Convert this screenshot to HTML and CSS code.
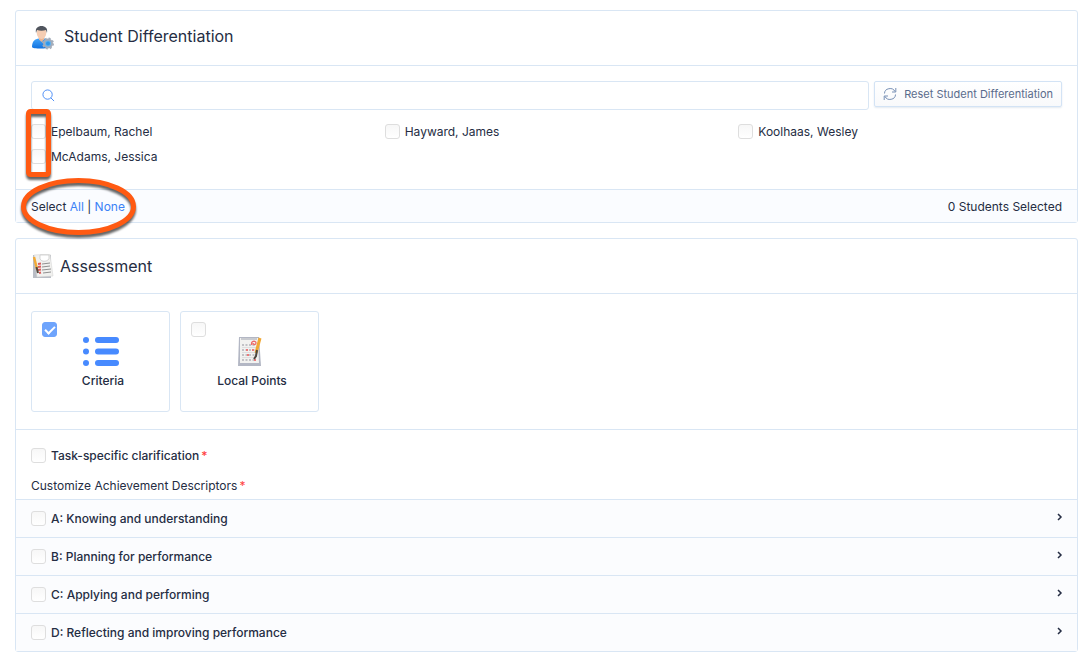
FILE: index.html
```html
<!DOCTYPE html>
<html lang="en">
<head>
  <meta charset="UTF-8">
  <meta name="viewport" content="width=device-width, initial-scale=1.0">
  <title>Student Differentiation</title>
  <link rel="stylesheet" href="styles.css">
</head>
<body>
  <section class="card">
    <header class="card-header students-header">
      <svg class="header-icon" viewBox="0 0 22 24" aria-hidden="true">
        <defs>
          <linearGradient id="shirt" x1="0" y1="0" x2="0" y2="1">
            <stop offset="0" stop-color="#43a5fb"/>
            <stop offset="1" stop-color="#1272df"/>
          </linearGradient>
        </defs>
        <path d="M0 21c0-6 3-8 7-8.500h5c3 .5 5 3 5 8.500 0 2-17 2-17 0z" fill="url(#shirt)"/>
        <path d="M7 11h5v2.500l-2.500 2.500-2.500-2.500z" fill="#e8b595"/>
        <ellipse cx="9.500" cy="7" rx="4.800" ry="6" fill="#f5cdb3"/>
        <path d="M4 7C3 2 6 0 9.500 0S16 2 15 7l-1-3c-3 1-6 1-9 0z" fill="#50555e"/>
        <circle cx="16" cy="17.500" r="4" fill="#65b2ed" stroke="#a3acba" stroke-width="2"/>
        <circle cx="16" cy="17.500" r="5.200" fill="none" stroke="#a3acba" stroke-width="1.600" stroke-dasharray="2 2.080"/>
        <circle cx="16" cy="17.500" r="2" fill="#2f96ea"/>
      </svg>
      <h2>Student Differentiation</h2>
    </header>

    <div class="toolbar">
      <label class="search">
        <svg viewBox="0 0 14 14" aria-hidden="true">
          <circle cx="6" cy="6" r="5"/>
          <path d="M9.500 9.500l3.500 3.500"/>
        </svg>
        <input type="text" aria-label="Search students">
      </label>
      <button class="reset-button" type="button">
        <svg viewBox="0 0 14 14" aria-hidden="true">
          <path d="M1.500 6.500a5.500 5 0 0 1 10.500-2M12.800 1v4H9M12.500 7.500a5.500 5 0 0 1-10.500 2M1.200 13V9H5"/>
        </svg>
        Reset Student Differentiation
      </button>
    </div>

    <div class="students">
      <label class="check"><input type="checkbox">Epelbaum, Rachel</label>
      <label class="check"><input type="checkbox">Hayward, James</label>
      <label class="check"><input type="checkbox">Koolhaas, Wesley</label>
      <label class="check"><input type="checkbox">McAdams, Jessica</label>
    </div>

    <footer class="card-footer">
      <span>Select <a href="#">All</a> | <a href="#">None</a></span>
      <span>0 Students Selected</span>
    </footer>

    <!-- highlights over the tick boxes and the select links -->
    <svg class="highlights" viewBox="0 0 130 140" aria-hidden="true">
      <rect x="12.500" y="5.500" width="20" height="63" rx="2"/>
      <ellipse cx="62.500" cy="100.500" rx="55" ry="26"/>
    </svg>
  </section>

  <section class="card">
    <header class="card-header">
      <svg class="header-icon" viewBox="0 0 22 24" aria-hidden="true">
        <path d="M1 1h18v23H1z" fill="#b9bdc5"/>
        <path d="M2 1l16-1 3 22-16 1z" fill="#f1f1ef" stroke="#d0d0d0" stroke-width=".5"/>
        <path d="M8 1h9v4c-3 3-7 3-9 0z" fill="#fff" stroke="#c4c4c4" stroke-width=".7"/>
        <path d="M10 10l8-1M10 13l8-1M10 16l9-1M11 19l8-1" stroke="#909090"/>
        <path d="M6 10l3-.5M6 13l3-.5M6 16l3-.5M7 19l2-.5" stroke="#dc5a58" stroke-width="2"/>
        <path d="M2 3l3 12" stroke="#f2aa35" stroke-width="2.400"/>
        <path d="M4.500 13l1.500 6" stroke="#55483c" stroke-width="2"/>
      </svg>
      <h2>Assessment</h2>
    </header>

    <div class="tiles">
      <label class="tile">
        <input type="checkbox" checked>
        <svg class="tile-icon" viewBox="0 0 36 30" aria-hidden="true">
          <g fill="#478aff">
            <circle cx="3" cy="3" r="3"/>
            <circle cx="3" cy="14.500" r="3"/>
            <circle cx="3" cy="26" r="3"/>
            <rect x="12" width="24" height="6" rx="3"/>
            <rect x="12" y="11.500" width="24" height="6" rx="3"/>
            <rect x="12" y="23" width="24" height="6" rx="3"/>
          </g>
        </svg>
        <span>Criteria</span>
      </label>
      <label class="tile">
        <input type="checkbox">
        <svg class="tile-icon" viewBox="0 0 36 30" aria-hidden="true">
          <path d="M7 0h20l2 29H6z" fill="#b3b7c4"/>
          <path d="M8 1h18l1 25H8z" fill="#f2f2f0"/>
          <path d="M9 2h16" stroke="#c9cbd0" stroke-width="2"/>
          <path d="M10 8h14M10 13h14M10 18h14M10 23h14" stroke="#c2c2c6" stroke-width="2" stroke-dasharray="2 1.500"/>
          <path d="M10 10.500h14M10 15.500h14M10 20.500h14" stroke="#d5d5d8" stroke-width=".7"/>
          <path d="M14 13h2M20 13h2M15 18h2M22 23h2" stroke="#ed7a7a" stroke-width="2"/>
          <path d="M20 8c-2-4 4-5 4-2 0 2-3 2-3 0" fill="none" stroke="#ee6767" stroke-width="1.300"/>
          <path d="M28 1l-4 15" stroke="#f1a834" stroke-width="3"/>
          <path d="M25 13l-1 6-2 3" fill="none" stroke="#4b463f" stroke-width="2"/>
        </svg>
        <span>Local Points</span>
      </label>
    </div>

    <div class="descriptors">
      <label class="check strong"><input type="checkbox">Task-specific clarification<span class="required">*</span></label>
      <p>Customize Achievement Descriptors<span class="required">*</span></p>
    </div>

    <div class="criteria">
      <div class="criterion">
        <label class="check strong"><input type="checkbox">A: Knowing and understanding</label>
        <button type="button" aria-label="Open A"><svg viewBox="0 0 6 8"><path d="M1 1l3 3-3 3"/></svg></button>
      </div>
      <div class="criterion">
        <label class="check strong"><input type="checkbox">B: Planning for performance</label>
        <button type="button" aria-label="Open B"><svg viewBox="0 0 6 8"><path d="M1 1l3 3-3 3"/></svg></button>
      </div>
      <div class="criterion">
        <label class="check strong"><input type="checkbox">C: Applying and performing</label>
        <button type="button" aria-label="Open C"><svg viewBox="0 0 6 8"><path d="M1 1l3 3-3 3"/></svg></button>
      </div>
      <div class="criterion">
        <label class="check strong"><input type="checkbox">D: Reflecting and improving performance</label>
        <button type="button" aria-label="Open D"><svg viewBox="0 0 6 8"><path d="M1 1l3 3-3 3"/></svg></button>
      </div>
    </div>
  </section>
</body>
</html>
```
FILE: styles.css
```css
* {
  box-sizing: border-box;
}
body {
  margin: 0;
  padding: 10px 14px 10px 15px;
  background: #fff;
  color: #252d43;
  font-family: Inter, "Liberation Sans", sans-serif;
  font-size: 12px;
  line-height: 15px;
}
a {
  color: #3b82f6;
  text-decoration: none;
}
.card {
  position: relative;
  margin-bottom: 15px;
  border: 1px solid #d9e6f4;
  border-radius: 3px;
}
.card-header {
  display: flex;
  align-items: center;
  gap: 6px;
  height: 55px;
  padding: 0 16px;
  border-bottom: 1px solid #d9e6f4;
}
.students-header {
  gap: 10px;
}
.students-header h2 {
  padding-bottom: 4px;
}
.header-icon {
  width: 22px;
  height: 24px;
}
h2 {
  margin: 0;
  font-size: 16px;
  font-weight: 400;
  line-height: 20px;
}

/* search row */
.toolbar {
  display: flex;
  align-items: flex-start;
  gap: 5px;
  padding: 15px 15px 0;
}
.search {
  display: flex;
  flex: 1;
  align-items: center;
  height: 29px;
  padding: 0 10px;
  border: 1px solid #d9e6f4;
  border-radius: 3px;
}
.search svg {
  width: 13px;
  height: 13px;
  fill: none;
  stroke: #4287f5;
}
.search input {
  flex: 1;
  padding: 0 8px;
  border: 0;
  outline: 0;
  background: none;
  font: inherit;
}
.reset-button {
  display: flex;
  align-items: center;
  gap: 7px;
  height: 26px;
  padding: 0 8px;
  border: 1px solid #d3e3f5;
  border-radius: 2px;
  background: linear-gradient(#fff, #f8f9fb);
  box-shadow: 0 1px 2px #e3e9f0;
  color: #5a6b8c;
  font: inherit;
  font-size: 11px;
  cursor: pointer;
}
.reset-button svg {
  width: 14px;
  height: 14px;
  fill: none;
  stroke: #7890b5;
}

/* tick boxes */
.check {
  display: flex;
  align-items: center;
  gap: 5px;
}
.strong {
  font-weight: 500;
}
input[type="checkbox"] {
  display: grid;
  place-items: center;
  flex: none;
  width: 15px;
  height: 15px;
  margin: 0;
  border: 1px solid #dedede;
  border-radius: 3px;
  background: linear-gradient(#f7f7f7, #fff);
  appearance: none;
}
input[type="checkbox"]:checked {
  border-color: #6ea4fc;
  background: #6ea4fc;
}
input[type="checkbox"]:checked::before {
  content: "";
  width: 8px;
  height: 4px;
  margin-bottom: 2px;
  border: solid #fff;
  border-width: 0 0 2px 2px;
  transform: rotate(-45deg);
}
.students {
  display: grid;
  grid-template-columns: repeat(3, 1fr);
  row-gap: 10px;
  padding: 14px 0 25px;
}
.students .check {
  padding-left: 15px;
}
.card-footer {
  display: flex;
  justify-content: space-between;
  padding: 9px 15px 8px;
  border-top: 1px solid #d9e6f4;
  background: #fafcff;
}
.highlights {
  position: absolute;
  top: 95px;
  left: 0;
  width: 130px;
  height: 140px;
  overflow: visible;
  fill: none;
  stroke: #ff5a12;
  stroke-width: 5px;
  filter: drop-shadow(0 3px 1px rgba(0, 0, 0, 0.6));
  pointer-events: none;
  z-index: 1;
}

/* assessment types */
.tiles {
  display: flex;
  gap: 10px;
  padding: 17px 15px;
  border-bottom: 1px solid #d9e6f4;
}
.tile {
  display: grid;
  grid-template-columns: 15px 1fr 15px;
  grid-template-rows: 15px 36px 15px;
  width: 139px;
  height: 101px;
  padding: 10px;
  border: 1px solid #d9e6f4;
  border-radius: 3px;
  font-weight: 500;
}
.tile-icon {
  grid-row: 2;
  grid-column: 1 / -1;
  justify-self: center;
  width: 36px;
  height: 30px;
}
.tile span {
  grid-row: 3;
  grid-column: 1 / -1;
  padding-left: 5px;
  text-align: center;
}

.descriptors {
  padding: 18px 15px 6px;
}
.descriptors p {
  margin: 15px 0 0;
}
.required {
  margin-left: 2px;
  color: #ff4242;
}
.check .required {
  margin-left: -3px;
}
.criterion {
  display: flex;
  align-items: center;
  justify-content: space-between;
  height: 38px;
  padding: 0 14px 0 15px;
  border-top: 1px solid #d9e6f4;
  background: #fbfcfe;
}
.criterion button {
  display: flex;
  padding: 0 0 4px;
  border: 0;
  background: none;
  cursor: pointer;
}
.criterion svg {
  width: 6px;
  height: 8px;
  fill: none;
  stroke: #252d43;
  stroke-width: 1.500px;
}
```
